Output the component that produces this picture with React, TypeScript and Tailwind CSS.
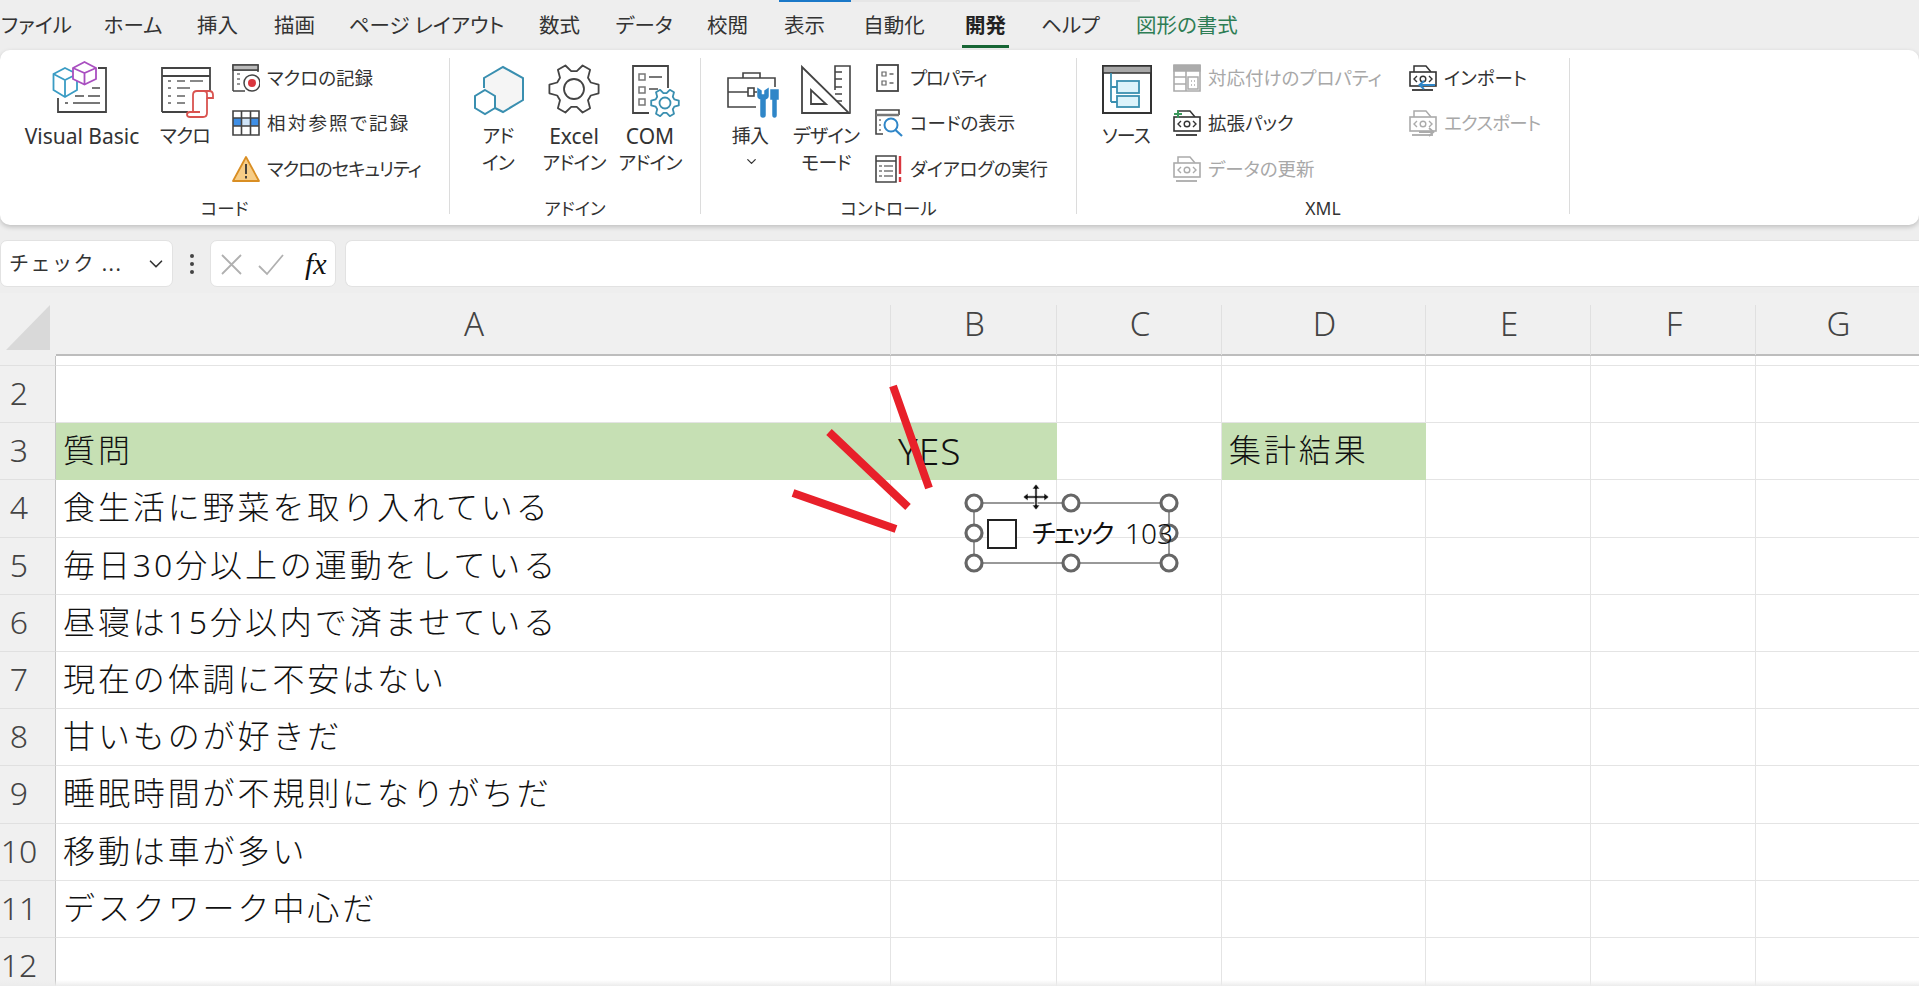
import { ChevronDown } from 'lucide-react';
import type { ReactNode } from 'react';

const DARK = '#444';
const TEAL = '#3a8fb0';
const GRAY = '#ababab';

// 歯車のパスを作る
function gearPath(cx: number, cy: number, outer: number, root: number) {
  const pts: string[] = [];
  for (let i = 0; i < 6; i++) {
    const a = i * 60;
    [
      [a - 21, root],
      [a - 10, outer],
      [a + 10, outer],
      [a + 21, root]
    ].forEach(([deg, r]) => {
      const rad = (deg * Math.PI) / 180;
      pts.push(`${(cx + r * Math.cos(rad)).toFixed(1)} ${(cy + r * Math.sin(rad)).toFixed(1)}`);
    });
  }
  return `M${pts.join('L')}Z`;
}

function Svg({ size = 60, children }: { size?: number; children: ReactNode }) {
  return (
    <svg width={size} height={size} viewBox={`0 0 ${size} ${size}`} fill="none" strokeWidth={1.5} stroke={DARK}>
      {children}
    </svg>
  );
}

function VbIcon() {
  return (
    <Svg>
      <path d="M6 38V52H54V8H46" strokeWidth={1.8} />
      <path d="M40 28H48M23 36H32M36 36H48M13 43H16M21 43H48" stroke="#777" strokeWidth={1.8} />
      <path d="M13 8L25 14V30L13 37L1.5 30V14Z" fill="#fff" stroke="#3a9cc4" strokeWidth={1.8} />
      <path d="M1.5 14L13 20L25 14M13 20V37" stroke="#3a9cc4" strokeWidth={1.8} />
      <path d="M32.5 2L44 8V19L32.5 24.5L21 19V8Z" fill="#fff" stroke="#a94fc0" strokeWidth={1.8} />
      <path d="M21 8L32.5 13L44 8M32.5 13V24.5" stroke="#a94fc0" strokeWidth={1.8} />
    </Svg>
  );
}

function MacroIcon() {
  return (
    <Svg>
      <path d="M7 52V8H55V31M7 52H33M7 16H55" strokeWidth={1.8} />
      <path d="M13 21H16M22 21H30M35 21H48M13 28H16M22 28H35M13 36H16M22 36H30M13 43H16M22 43H30" stroke="#888" strokeWidth={1.8} />
      <path d="M38 52V35Q38 31 42 31H54Q58 31 58 35V38H52V34Q52 31 49 31" fill="#fff" stroke="#d9534f" strokeWidth={1.8} />
      <path d="M52 38V53Q52 57 48 57H35Q32 57 32 54.5T35 52H45" fill="#fff" stroke="#d9534f" strokeWidth={1.8} />
    </Svg>
  );
}

function RecordIcon() {
  return (
    <Svg size={28}>
      <path d="M1 27V1H26V8M1 6H26M1 27H13" />
      <rect x="1" y="1" width="25" height="5" fill="#bbb" />
      <path d="M5 10H8M5 15H8M5 20H8" stroke="#777" />
      <circle cx="20" cy="19" r="8" fill="#fff" />
      <circle cx="20" cy="19" r="4" fill="#d9363e" stroke="none" />
    </Svg>
  );
}

function RelativeIcon() {
  return (
    <Svg size={28}>
      <rect x="1" y="9" width="8.5" height="8" fill="#3f8fe6" stroke="none" />
      <rect x="18.5" y="9" width="8.5" height="8" fill="#3f8fe6" stroke="none" />
      <rect x="9.5" y="9" width="9" height="8" fill="#cfe4f8" stroke="none" />
      <path d="M1 2H27V26H1ZM1 9H27M1 17H27M9.5 2V26M18.5 2V26" strokeWidth={1.6} />
    </Svg>
  );
}

function WarningIcon() {
  return (
    <Svg size={28}>
      <path d="M14 2L27 26H1Z" fill="#f7cd86" stroke="#d98e23" strokeWidth={1.8} strokeLinejoin="round" />
      <path d="M14 9V19" stroke="#333" strokeWidth={1.8} />
      <path d="M14 21V23.5" stroke="#333" strokeWidth={1.8} />
    </Svg>
  );
}

function AddinIcon() {
  return (
    <Svg>
      <path d="M16 28V18L35 7L55 18V40L35 52L27 48" fill="#f5f5f5" stroke={TEAL} strokeWidth={2} />
      <path d="M17 30L27 36V48L17 54L7 48V36Z" fill="#fff" stroke={TEAL} strokeWidth={2} />
    </Svg>
  );
}

function GearIcon() {
  return (
    <Svg>
      <path d={gearPath(30, 29, 25, 18)} strokeLinejoin="round" strokeWidth={1.8} />
      <circle cx="30" cy="29" r="10" strokeWidth={1.8} />
    </Svg>
  );
}

function ComIcon() {
  return (
    <Svg>
      <path d="M29 53H13V6H48V28" strokeWidth={1.8} />
      <rect x="19" y="14" width="6" height="6" stroke="#777" />
      <rect x="19" y="27" width="6" height="6" stroke="#777" />
      <rect x="19" y="39" width="6" height="6" stroke="#777" />
      <path d="M29 17H42M29 29H38" stroke="#777" strokeWidth={1.8} />
      <path d={gearPath(45, 43, 14, 10)} fill="#fff" stroke={TEAL} strokeLinejoin="round" strokeWidth={1.8} />
      <circle cx="45" cy="43" r="5.5" stroke={TEAL} strokeWidth={1.8} />
    </Svg>
  );
}

function ToolboxIcon() {
  return (
    <Svg>
      <path d="M23 18V13H40V18" strokeWidth={1.6} />
      <path d="M36 47H8V18H55V27M8 32H28M34 32H37" strokeWidth={1.6} />
      <rect x="28" y="28" width="6" height="8" strokeWidth={1.6} />
      <path d="M38 29V36Q38 38 41 39V55Q41 57 43 57T45 55V39Q48 38 48 36V29L45 31V35H41V31Z" fill="#2f86c8" stroke="#2f86c8" />
      <path d="M51 30H58V39H56V55Q56 57 54.5 57T53 55V39H51Z" fill="#2f86c8" stroke="#2f86c8" />
    </Svg>
  );
}

function DesignIcon() {
  return (
    <Svg>
      <path d="M39 30V6H54V53" strokeWidth={1.6} />
      <path d="M39 12H46M39 19H46M39 27H46M39 34H46M39 41H46" strokeWidth={1.4} />
      <path d="M6 7V53H53Z" fill="#fff" strokeWidth={1.8} />
      <path d="M15 30V44H30Z" strokeWidth={1.8} />
    </Svg>
  );
}

function PropertyIcon() {
  return (
    <Svg size={28}>
      <rect x="2" y="1" width="21" height="26" strokeWidth={1.8} />
      <path d="M7 8H11V12H7ZM7 17H11V21H7Z" stroke="#666" strokeWidth={1.2} />
      <path d="M14.5 10H18.5M14.5 19H18.5" stroke="#666" strokeWidth={1.4} />
    </Svg>
  );
}

function CodeViewIcon() {
  return (
    <Svg size={28}>
      <path d="M8 25H1V1H24V6" strokeWidth={1.6} />
      <path d="M1 6H24" strokeWidth={2.5} stroke="#777" />
      <path d="M5 10V12M5 15V17M5 20V22" stroke="#777" />
      <circle cx="16" cy="16" r="6.5" fill="#fff" stroke="#2f86c8" strokeWidth={2} />
      <path d="M20.5 21L27 27" stroke="#2f86c8" strokeWidth={2.2} />
    </Svg>
  );
}

function DialogIcon() {
  return (
    <Svg size={28}>
      <path d="M1 1H21V27H1ZM1 6H21" strokeWidth={1.6} />
      <path d="M4 11H7M9 11H18M4 16H7M9 16H18M4 21H7M9 21H18" stroke="#777" />
      <path d="M25 1V19M25 22V27" stroke="#d9363e" strokeWidth={2.4} />
    </Svg>
  );
}

function SourceIcon() {
  return (
    <Svg>
      <rect x="7" y="6" width="48" height="47" fill="#fff" strokeWidth={2} stroke="#333" />
      <rect x="7" y="6" width="48" height="7" fill="#a8a8a8" stroke="#333" />
      <path d="M15 13V42M15 27H21M15 42H21" stroke={TEAL} strokeWidth={1.8} />
      <rect x="21" y="21" width="22" height="12" fill="#dcf3fb" stroke={TEAL} strokeWidth={1.8} />
      <rect x="21" y="36" width="22" height="11" fill="#dcf3fb" stroke={TEAL} strokeWidth={1.8} />
    </Svg>
  );
}

function MapIcon() {
  return (
    <Svg size={28}>
      <path d="M1 1H27V7H1Z" fill={GRAY} stroke={GRAY} />
      <path d="M1 1V27H27V1M1 13H13M1 20H13M13 7V27" stroke={GRAY} strokeWidth={1.6} />
      <rect x="15" y="13" width="10" height="12" stroke={GRAY} />
      <path d="M18 17H19M21 17H22M18 21H19M21 21H22" stroke={GRAY} />
    </Svg>
  );
}

// XML系の共通アイコン(<o> の箱)
function XmlIcon({ color, children }: { color: string; children?: ReactNode }) {
  return (
    <Svg size={28}>
      <path d="M5 8V2H17L22 8" stroke={color} strokeWidth={1.5} />
      <rect x="1" y="8" width="26" height="14" fill="#fff" stroke={color} strokeWidth={1.6} />
      <path d="M8 12L5 15L8 18M20 12L23 15L20 18" stroke={color} strokeWidth={1.4} />
      <circle cx="14" cy="15" r="2.8" stroke={color} strokeWidth={1.4} />
      <path d="M3 26H24" stroke={color} strokeWidth={1.8} />
      {children}
    </Svg>
  );
}

function LargeButton({ icon, lines, width, chevron }: { icon: ReactNode; lines: string[]; width: string; chevron?: boolean }) {
  return (
    <div className={`flex flex-col items-center shrink-0 ${width}`}>
      <div className="flex h-[60px] w-[60px] shrink-0">{icon}</div>
      <div className="mt-[3px] flex flex-col items-center text-[19px] leading-[27px] whitespace-nowrap text-[#333]">
        {lines.map(line => (
          <span key={line} className={/^[A-Za-z ]+$/.test(line) ? 'text-[21px]' : 'tracking-[-0.8px]'}>
            {line}
          </span>
        ))}
        {chevron && <ChevronDown className="ml-[3px] mt-[4px]" size={15} strokeWidth={2} />}
      </div>
    </div>
  );
}

function SmallButton({ icon, label, disabled, tracking = '' }: { icon: ReactNode; label: string; disabled?: boolean; tracking?: string }) {
  return (
    <div className={`flex h-[45.5px] items-center gap-[7px] whitespace-nowrap text-[18.5px] ${disabled ? 'text-[#a8a8a8]' : 'text-[#333]'}`}>
      <div className="flex h-[28px] w-[28px] shrink-0">{icon}</div>
      <span className={tracking}>{label}</span>
    </div>
  );
}

function Group({ label, width, children }: { label: string; width: string; children: ReactNode }) {
  return (
    <div className={`flex h-[175px] shrink-0 flex-col ${width}`}>
      <div className="flex h-[144px] items-start pt-[10px]">{children}</div>
      <div className="mt-[1px] h-[26px] text-center text-[17.5px] leading-[26px] text-[#333]">{label}</div>
    </div>
  );
}

function Separator() {
  return <div className="mt-[8px] h-[156px] w-px shrink-0 bg-[#dcdcdc]" />;
}

const tabs = [
  { label: 'ファイル', w: 'w-[67px]' },
  { label: 'ホーム', w: 'w-[58px]' },
  { label: '挿入', w: 'w-[43px]' },
  { label: '描画', w: 'w-[43px]' },
  { label: 'ページ レイアウト', w: 'w-[153px]' },
  { label: '数式', w: 'w-[45px]' },
  { label: 'データ', w: 'w-[56px]' },
  { label: '校閲', w: 'w-[43px]' },
  { label: '表示', w: 'w-[43px]' },
  { label: '自動化', w: 'w-[68px]' },
  { label: '開発', w: 'w-[47px]' },
  { label: 'ヘルプ', w: 'w-[55px]' },
  { label: '図形の書式', w: 'w-[110px]' }
];

const columns = [
  { label: 'A', cls: 'border-r border-[#e0e0e0]' },
  { label: 'B', cls: 'border-r border-[#e0e0e0]' },
  { label: 'C', cls: 'border-r border-[#e0e0e0]' },
  { label: 'D', cls: 'border-r border-[#e0e0e0]' },
  { label: 'E', cls: 'border-r border-[#e0e0e0]' },
  { label: 'F', cls: 'border-r border-[#e0e0e0]' },
  { label: 'G', cls: '' }
];

const rows: { n: number; a?: string }[] = [
  { n: 2 },
  { n: 3, a: '質問' },
  { n: 4, a: '食生活に野菜を取り入れている' },
  { n: 5, a: '毎日30分以上の運動をしている' },
  { n: 6, a: '昼寝は15分以内で済ませている' },
  { n: 7, a: '現在の体調に不安はない' },
  { n: 8, a: '甘いものが好きだ' },
  { n: 9, a: '睡眠時間が不規則になりがちだ' },
  { n: 10, a: '移動は車が多い' },
  { n: 11, a: 'デスクワーク中心だ' },
  { n: 12 }
];

function Cell({ text, green, noRight, latin }: { text?: string; green?: boolean; noRight?: boolean; latin?: boolean }) {
  const border = green ? 'border-[#c6e0b4] bg-[#c6e0b4]' : 'border-[#e4e4e4]';
  const size = latin ? 'text-[37px] tracking-[1px]' : 'text-[32px] tracking-[2.9px]';
  return (
    <div className={`flex items-center overflow-visible whitespace-nowrap border-b pb-[2px] pl-[7px] font-light text-[#111] [font-feature-settings:normal] ${size} ${border} ${noRight ? '' : 'border-r'}`}>
      {text}
    </div>
  );
}

const HANDLES = [
  [974, 503],
  [1071, 503],
  [1169, 503],
  [974, 533],
  [1169, 533],
  [974, 563],
  [1071, 563],
  [1169, 563]
];

export default function App() {
  return (
    <div className="relative h-[986px] w-[1919px] overflow-hidden bg-[#eeeeee] text-[#333] [font-family:'Noto_Sans','Noto_Sans_CJK_JP',sans-serif] [font-feature-settings:'palt']">
      {/* 上端のバー */}
      <div className="flex h-[2px] pl-[779px]">
        <div className="w-[72px] bg-[#1a78c8]" />
        <div className="w-[289px] bg-[#e6e6e6]" />
      </div>

      {/* タブ */}
      <div className="flex h-[48px] items-center gap-[34px] pb-[2px] pl-[3px] text-[20.5px]">
        {tabs.map(tab => (
          <div
            key={tab.label}
            className={`relative flex shrink-0 justify-center whitespace-nowrap ${tab.w} ${tab.label === '開発' ? 'font-bold text-[#222]' : ''} ${tab.label === '図形の書式' ? 'text-[#2e7d55]' : ''}`}
          >
            {tab.label}
            {tab.label === '開発' && <div className="absolute bottom-[-8px] left-0 h-[3px] w-full bg-[#166534]" />}
          </div>
        ))}
      </div>

      {/* リボン */}
      <div className="flex h-[175px] rounded-[10px] bg-white shadow-[0_2px_5px_rgba(0,0,0,0.2)]">
        <Group label="コード" width="w-[449px]">
          <div className="ml-[17px] flex">
            <LargeButton icon={<VbIcon />} lines={['Visual Basic']} width="w-[130px]" />
            <LargeButton icon={<MacroIcon />} lines={['マクロ']} width="w-[76px]" />
            <div className="-mt-[5px] ml-[9px] flex flex-col">
              <SmallButton icon={<RecordIcon />} label="マクロの記録" />
              <SmallButton icon={<RelativeIcon />} label="相対参照で記録" tracking="tracking-[2.2px]" />
              <SmallButton icon={<WarningIcon />} label="マクロのセキュリティ" tracking="tracking-[-1.1px]" />
            </div>
          </div>
        </Group>
        <Separator />
        <Group label="アドイン" width="w-[250px]">
          <div className="ml-[10px] flex">
            <LargeButton icon={<AddinIcon />} lines={['アド', 'イン']} width="w-[76px]" />
            <LargeButton icon={<GearIcon />} lines={['Excel', 'アドイン']} width="w-[76px]" />
            <LargeButton icon={<ComIcon />} lines={['COM', 'アドイン']} width="w-[76px]" />
          </div>
        </Group>
        <Separator />
        <Group label="コントロール" width="w-[375px]">
          <div className="ml-[11px] flex">
            <LargeButton icon={<ToolboxIcon />} lines={['挿入']} width="w-[76px]" chevron />
            <LargeButton icon={<DesignIcon />} lines={['デザイン', 'モード']} width="w-[76px]" />
            <div className="-mt-[5px] ml-[11px] flex flex-col">
              <SmallButton icon={<PropertyIcon />} label="プロパティ" tracking="tracking-[-1.2px]" />
              <SmallButton icon={<CodeViewIcon />} label="コードの表示" />
              <SmallButton icon={<DialogIcon />} label="ダイアログの実行" tracking="tracking-[-0.3px]" />
            </div>
          </div>
        </Group>
        <Separator />
        <Group label="XML" width="w-[492px]">
          <div className="ml-[19px] flex">
            <LargeButton icon={<SourceIcon />} lines={['ソース']} width="w-[60px]" />
            <div className="-mt-[5px] ml-[17px] flex w-[236px] flex-col">
              <SmallButton icon={<MapIcon />} label="対応付けのプロパティ" disabled />
              <SmallButton
                label="拡張パック"
                icon={
                  <XmlIcon color="#333">
                    <path d="M5 1V9M1 5H9" stroke="#3a9a5c" strokeWidth={1.8} />
                  </XmlIcon>
                }
              />
              <SmallButton icon={<XmlIcon color={GRAY} />} label="データの更新" disabled />
            </div>
            <div className="-mt-[5px] flex flex-col">
              <SmallButton
                label="インポート"
                icon={
                  <XmlIcon color="#333">
                    <path d="M26 21H11M15 17L10.5 21L15 25" stroke="#2f86c8" strokeWidth={2} />
                  </XmlIcon>
                }
              />
              <SmallButton
                label="エクスポート"
                disabled
                tracking="tracking-[-0.7px]"
                icon={
                  <XmlIcon color={GRAY}>
                    <path d="M10 23H24M20 19L24.5 23L20 27" stroke={GRAY} strokeWidth={1.8} />
                  </XmlIcon>
                }
              />
            </div>
          </div>
        </Group>
        <Separator />
      </div>

      {/* 数式バー */}
      <div className="mt-[15px] flex h-[47px] items-stretch">
        <div className="flex w-[173px] items-center justify-between rounded-[7px] border border-[#e2e2e2] bg-white pl-[8px] pr-[5px] text-[20px] [font-feature-settings:normal]">
          <span className="tracking-[1.5px] whitespace-nowrap">チェック ...</span>
          <ChevronDown size={22} strokeWidth={1.8} />
        </div>
        <div className="flex w-[37px] flex-col items-center justify-center gap-[4px]">
          <div className="h-[4px] w-[4px] rounded-full bg-[#444]" />
          <div className="h-[4px] w-[4px] rounded-full bg-[#444]" />
          <div className="h-[4px] w-[4px] rounded-full bg-[#444]" />
        </div>
        <div className="flex w-[126px] items-center rounded-[7px] border border-[#e2e2e2] bg-white pl-[10px]">
          <svg width="66" height="24" viewBox="0 0 66 24" fill="none" stroke="#b0b0b0" strokeWidth={1.8}>
            <path d="M1 3L20 22M20 3L1 22" />
            <path d="M38 14L46 22L62 3" />
          </svg>
          <span className="ml-[18px] text-[30px] italic leading-none text-[#111] [font-family:'Liberation_Serif',serif]">fx</span>
        </div>
        <div className="ml-[9px] flex-1 rounded-l-[7px] border border-r-0 border-[#e2e2e2] bg-white" />
      </div>

      {/* シート */}
      <div className="mt-[6px] grid grid-cols-[56px_835px_166px_165px_204px_165px_165px_163px] grid-rows-[63px_10px_repeat(11,57.2px)] bg-white">
        <div className="relative bg-[#f0f0f0]">
          <svg className="absolute left-[6px] top-[12px]" width="44" height="45" viewBox="0 0 44 45">
            <path d="M44 0V45H0Z" fill="#d9d9d9" />
          </svg>
        </div>
        {columns.map(col => (
          <div key={col.label} className="flex items-center justify-center border-b-2 border-b-[#bdbdbd] bg-[#f0f0f0] text-[33px] font-light text-[#444]">
            <div className={`mt-[12px] flex h-[50px] w-full items-center justify-center pb-[12px] pl-[2px] ${col.cls}`}>{col.label}</div>
          </div>
        ))}

        <div className="border-r border-b border-r-[#c4c4c4] border-b-[#e0e0e0] bg-[#f0f0f0]" />
        {columns.map(col => (
          <div key={col.label} className={`border-b border-b-[#e4e4e4] ${col.label === 'G' ? '' : 'border-r border-r-[#e4e4e4]'}`} />
        ))}

        {rows.map(row => (
          <div key={row.n} className="contents">
            <div className="flex items-center border-r border-b border-r-[#c4c4c4] border-b-[#e0e0e0] bg-[#f0f0f0] pb-[2px] text-[32px] font-light text-[#444]">
              <span className="w-[38px] text-center">{row.n}</span>
            </div>
            <Cell text={row.a} green={row.n === 3} />
            <Cell text={row.n === 3 ? 'YES' : undefined} green={row.n === 3} latin />
            <Cell />
            <Cell text={row.n === 3 ? '集計結果' : undefined} green={row.n === 3} />
            <Cell />
            <Cell />
            <Cell noRight />
          </div>
        ))}
      </div>

      {/* 下端の影 */}
      <div className="absolute bottom-0 left-0 h-[6px] w-full bg-gradient-to-b from-transparent to-[#ececec]" />

      {/* 赤線・選択中のチェックボックス */}
      <svg className="absolute left-0 top-0" width="1919" height="986" viewBox="0 0 1919 986" fill="none">
        <path d="M893 386L929 488M829 432L908 507M793 493L896 529" stroke="#e8202a" strokeWidth={8} />
        <rect x="974" y="503" width="195" height="60" stroke="#777" strokeWidth={1.5} />
        {HANDLES.map(([cx, cy]) => (
          <circle key={`${cx}-${cy}`} cx={cx} cy={cy} r={8} fill="#fff" stroke="#666" strokeWidth={3.2} />
        ))}
        <rect x="988" y="520" width="28" height="28" fill="#fff" stroke="#222" strokeWidth={2} />
        <path
          d="M1036 484L1040 489H1037.2V495.8H1044V493L1049 497L1044 501V498.2H1037.2V505H1040L1036 510L1032 505H1034.8V498.2H1028V501L1023 497L1028 493V495.8H1034.8V489H1032Z"
          fill="#111"
          stroke="#fff"
          strokeWidth={0.8}
        />
      </svg>
      <div className="absolute left-[1032px] top-[514px] flex items-center whitespace-nowrap leading-[38px] text-[#111]">
        <span className="text-[26px] tracking-[-2.2px]">チェック</span>
        <span className="ml-[13px] text-[28px] font-light">103</span>
      </div>
    </div>
  );
}
